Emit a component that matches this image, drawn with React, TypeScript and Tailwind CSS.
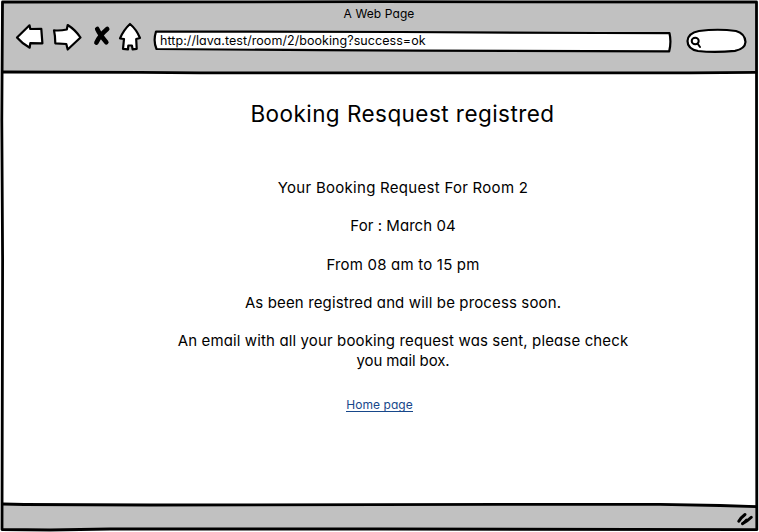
function Frame() {
  return (
    <svg className="pointer-events-none absolute inset-0" width="759" height="532" viewBox="0 0 759 532" fill="none" stroke="#000" strokeWidth="2.8" strokeLinecap="round" strokeLinejoin="round">
      <path d="M2.5 2 L380 1.7 L756.5 2 L756.6 250 L756.8 529.7 L380 529 L110 529 L50 530 L2 529.5 L2.6 260 L1.8 120 L2.5 2" />
      <path d="M3 72 L140 72.4 L200 72.8 L420 72.8 L690 72.8 L756 72.3" />
      <path d="M3 504 L24 504.5 L150 505 L500 504.3 L660 504.3 L720 505.5 L756 506.7" />
      <g strokeWidth="3">
        <path d="M738.8 521.3 Q741 517.5 745 514.5" />
        <path d="M742.5 523.6 Q747 521.5 751.3 517.3" />
        <path d="M742.5 523.6 L746.2 519.6" strokeWidth="2" />
      </g>
    </svg>
  );
}

function BackIcon() {
  return (
    <svg className="h-[30px] w-[30px]" viewBox="15 22 30 30" fill="#fff" stroke="#000" strokeWidth="2.2" strokeLinejoin="round">
      <path d="M17 37.5 L29.5 25.3 L30.3 29 L41.3 28.8 L42.4 43.4 L30.3 43.2 L29.7 47.7 Q22 43.5 17 37.5Z" />
    </svg>
  );
}

function ForwardIcon() {
  return (
    <svg className="h-[30px] w-[30px]" viewBox="52 22 30 30" fill="#fff" stroke="#000" strokeWidth="2.2" strokeLinejoin="round">
      <path d="M54 30.3 Q60 31 66.8 29.5 L67.7 25 Q75 29.5 80.5 37.5 L67.7 49.5 L66.3 44 L55.3 43.3 Q55.3 36 54 30.3Z" />
    </svg>
  );
}

function StopIcon() {
  return (
    <svg className="h-[24px] w-[20px]" viewBox="92 24 20 24" fill="none" stroke="#000" strokeLinecap="round">
      <path d="M97.2 29 Q100 35 106.3 42.2" strokeWidth="4.6" />
      <path d="M107.2 28.9 Q99.5 35.5 96.4 42.6" strokeWidth="4.6" />
    </svg>
  );
}

function HomeIcon() {
  return (
    <svg className="h-[30px] w-[24px]" viewBox="118 22 24 30" fill="#fff" stroke="#000" strokeWidth="2.2" strokeLinejoin="round">
      <path d="M130 24 Q136.5 29.5 140 38 L136.2 39 L136.7 48.8 L132.6 49.3 L131.9 45.5 L128.3 45.5 L128 49.3 L123 48.8 L124 39 L120 38.5 Q123.5 30 130 24Z" />
    </svg>
  );
}

function AddressBar() {
  return (
    <div className="relative ml-[11px] flex h-[24px] w-[520px] items-center">
      <svg className="absolute inset-0" width="520" height="24" viewBox="153 29 520 24" fill="#fff" stroke="#000" strokeWidth="2.2" strokeLinejoin="round">
        <path d="M156 31.5 L400 32 L600 33 L669.5 33.2 Q671.5 42 669.2 51.3 L420 50.6 L320 50.2 L156.5 49 Q153 41 156 31.5Z" />
      </svg>
      <span className="relative pl-[7px] text-[12.5px] tracking-[0.06px]">http://lava.test/room/2/booking?success=ok</span>
    </div>
  );
}

function SearchBox() {
  return (
    <svg className="ml-[12px] h-[28px] w-[63px]" viewBox="685 27 63 28" fill="#fff" stroke="#000" strokeWidth="2.2" strokeLinejoin="round">
      <path d="M699 31 Q718 28.5 736 31 Q745 33.5 745.5 42 Q745 49 735 50.8 Q715 53 698 51 Q687.5 49 687.5 41 Q688 33 699 31Z" />
      <ellipse cx="695.2" cy="41" rx="3.5" ry="3.2" strokeWidth="2" />
      <path d="M697.5 43.5 L700 47" strokeWidth="2" strokeLinecap="round" />
    </svg>
  );
}

export default function App() {
  return (
    <div className="relative flex h-[532px] w-[759px] flex-col overflow-hidden bg-white font-['Inter','Liberation_Sans',sans-serif] text-black [font-feature-settings:'cv11']">
      <header className="mx-[2px] mt-[2px] h-[70px] bg-[#c1c1c1]">
        <h1 className="h-[20px] pr-[1px] pt-[2px] text-center text-[12px] leading-[20px] tracking-[0.1px]">A Web Page</h1>
        <nav className="flex items-start pl-[13px]">
          <BackIcon />
          <span className="ml-[7px]"><ForwardIcon /></span>
          <span className="ml-[10px] mt-[2px]"><StopIcon /></span>
          <span className="ml-[6px]"><HomeIcon /></span>
          <div className="mt-[7px]"><AddressBar /></div>
          <div className="mt-[5px]"><SearchBox /></div>
        </nav>
      </header>
      <main className="flex h-[433px] flex-col items-center pl-[47px] pt-[26px] text-[15px] leading-[19.2px]">
        <h2 className="h-[32px] pr-[1px] text-[22.5px] leading-[31px] tracking-[0.45px]">Booking Resquest registred</h2>
        <p className="mt-[48px] tracking-[0.28px]">Your Booking Request For Room 2</p>
        <p className="mt-[19.2px] tracking-[0.05px]">For : March 04</p>
        <p className="mt-[19.2px] tracking-[0.2px]">From 08 am to 15 pm</p>
        <p className="mt-[19.2px] tracking-[0.13px]">As been registred and will be process soon.</p>
        <p className="mt-[18.6px] tracking-[0.13px]">An email with all your booking request was sent, please check</p>
        <p className="mt-[0.8px] tracking-[-0.1px]">you mail box.</p>
        <a href="#" className="mr-[47px] mt-[28px] border-b border-[#17478a] text-[12px] leading-[13px] tracking-[0.05px] text-[#17478a]">Home page</a>
      </main>
      <footer className="mx-[2px] h-[25px] bg-[#c1c1c1]" />
      <Frame />
    </div>
  );
}
